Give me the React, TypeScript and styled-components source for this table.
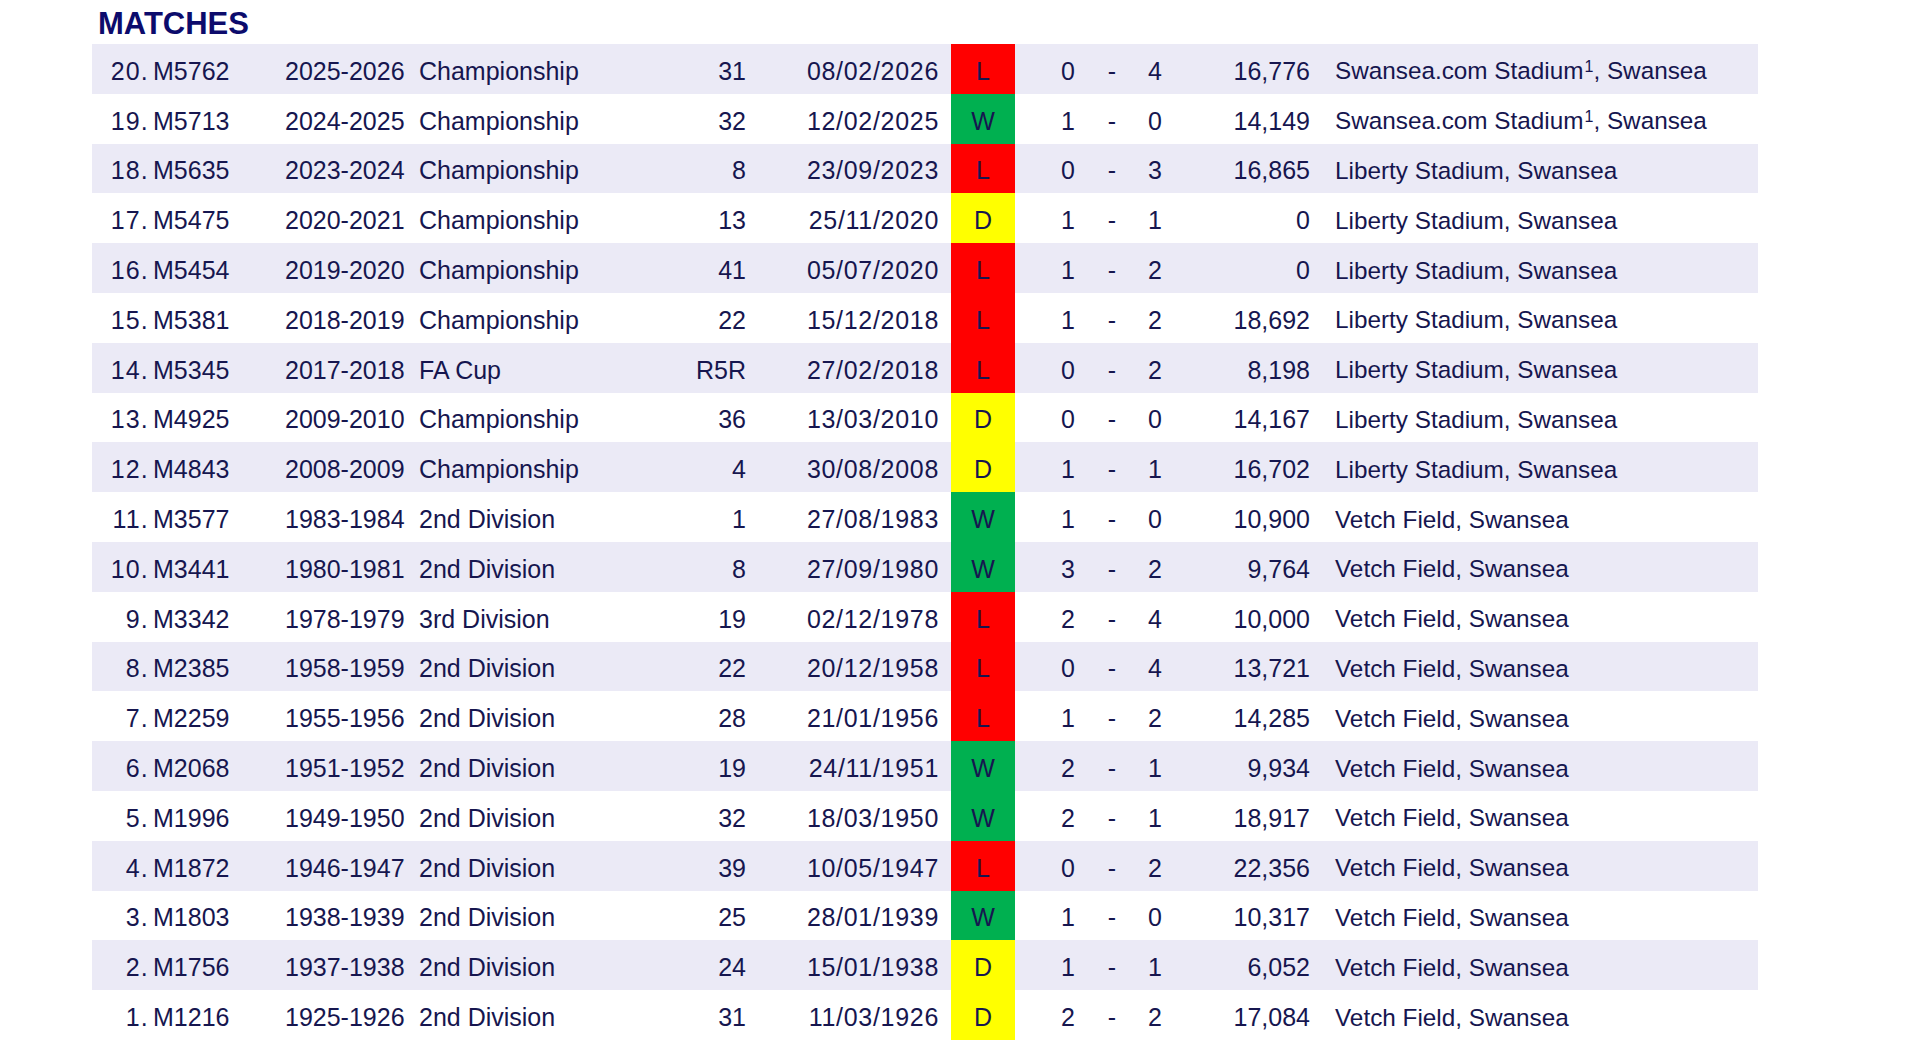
import React from 'react';
import styled, { createGlobalStyle } from 'styled-components';

type Result = 'W' | 'D' | 'L';

type Match = {
  no: number;
  code: string;
  season: string;
  competition: string;
  round: string;
  date: string;
  result: Result;
  home: number;
  away: number;
  attendance: string;
  venue: string;
  note?: boolean;
};

const LIBERTY = 'Liberty Stadium, Swansea';
const VETCH = 'Vetch Field, Swansea';

const matches: Match[] = [
  { no: 20, code: 'M5762', season: '2025-2026', competition: 'Championship', round: '31', date: '08/02/2026', result: 'L', home: 0, away: 4, attendance: '16,776', venue: 'Swansea.com Stadium', note: true },
  { no: 19, code: 'M5713', season: '2024-2025', competition: 'Championship', round: '32', date: '12/02/2025', result: 'W', home: 1, away: 0, attendance: '14,149', venue: 'Swansea.com Stadium', note: true },
  { no: 18, code: 'M5635', season: '2023-2024', competition: 'Championship', round: '8', date: '23/09/2023', result: 'L', home: 0, away: 3, attendance: '16,865', venue: LIBERTY },
  { no: 17, code: 'M5475', season: '2020-2021', competition: 'Championship', round: '13', date: '25/11/2020', result: 'D', home: 1, away: 1, attendance: '0', venue: LIBERTY },
  { no: 16, code: 'M5454', season: '2019-2020', competition: 'Championship', round: '41', date: '05/07/2020', result: 'L', home: 1, away: 2, attendance: '0', venue: LIBERTY },
  { no: 15, code: 'M5381', season: '2018-2019', competition: 'Championship', round: '22', date: '15/12/2018', result: 'L', home: 1, away: 2, attendance: '18,692', venue: LIBERTY },
  { no: 14, code: 'M5345', season: '2017-2018', competition: 'FA Cup', round: 'R5R', date: '27/02/2018', result: 'L', home: 0, away: 2, attendance: '8,198', venue: LIBERTY },
  { no: 13, code: 'M4925', season: '2009-2010', competition: 'Championship', round: '36', date: '13/03/2010', result: 'D', home: 0, away: 0, attendance: '14,167', venue: LIBERTY },
  { no: 12, code: 'M4843', season: '2008-2009', competition: 'Championship', round: '4', date: '30/08/2008', result: 'D', home: 1, away: 1, attendance: '16,702', venue: LIBERTY },
  { no: 11, code: 'M3577', season: '1983-1984', competition: '2nd Division', round: '1', date: '27/08/1983', result: 'W', home: 1, away: 0, attendance: '10,900', venue: VETCH },
  { no: 10, code: 'M3441', season: '1980-1981', competition: '2nd Division', round: '8', date: '27/09/1980', result: 'W', home: 3, away: 2, attendance: '9,764', venue: VETCH },
  { no: 9, code: 'M3342', season: '1978-1979', competition: '3rd Division', round: '19', date: '02/12/1978', result: 'L', home: 2, away: 4, attendance: '10,000', venue: VETCH },
  { no: 8, code: 'M2385', season: '1958-1959', competition: '2nd Division', round: '22', date: '20/12/1958', result: 'L', home: 0, away: 4, attendance: '13,721', venue: VETCH },
  { no: 7, code: 'M2259', season: '1955-1956', competition: '2nd Division', round: '28', date: '21/01/1956', result: 'L', home: 1, away: 2, attendance: '14,285', venue: VETCH },
  { no: 6, code: 'M2068', season: '1951-1952', competition: '2nd Division', round: '19', date: '24/11/1951', result: 'W', home: 2, away: 1, attendance: '9,934', venue: VETCH },
  { no: 5, code: 'M1996', season: '1949-1950', competition: '2nd Division', round: '32', date: '18/03/1950', result: 'W', home: 2, away: 1, attendance: '18,917', venue: VETCH },
  { no: 4, code: 'M1872', season: '1946-1947', competition: '2nd Division', round: '39', date: '10/05/1947', result: 'L', home: 0, away: 2, attendance: '22,356', venue: VETCH },
  { no: 3, code: 'M1803', season: '1938-1939', competition: '2nd Division', round: '25', date: '28/01/1939', result: 'W', home: 1, away: 0, attendance: '10,317', venue: VETCH },
  { no: 2, code: 'M1756', season: '1937-1938', competition: '2nd Division', round: '24', date: '15/01/1938', result: 'D', home: 1, away: 1, attendance: '6,052', venue: VETCH },
  { no: 1, code: 'M1216', season: '1925-1926', competition: '2nd Division', round: '31', date: '11/03/1926', result: 'D', home: 2, away: 2, attendance: '17,084', venue: VETCH },
];

const resultColours: Record<Result, string> = {
  W: '#00b050',
  D: '#ffff00',
  L: '#ff0000',
};

const App = () => {
  return (
    <PageStyled>
      <GlobalStyle />
      <TitleStyled>MATCHES</TitleStyled>
      <TableStyled>
        {matches.map((m, i) => (
          <RowStyled key={m.code} $shaded={i % 2 === 0}>
            <NumberStyled>{m.no}.</NumberStyled>
            <CodeStyled>{m.code}</CodeStyled>
            <CellStyled>{m.season}</CellStyled>
            <CellStyled>{m.competition}</CellStyled>
            <CellStyled $align="right">{m.round}</CellStyled>
            <DateStyled>{m.date}</DateStyled>
            <ResultStyled $result={m.result}>{m.result}</ResultStyled>
            <HomeScoreStyled>{m.home}</HomeScoreStyled>
            <CellStyled $align="center">-</CellStyled>
            <CellStyled $align="center">{m.away}</CellStyled>
            <CellStyled $align="right">{m.attendance}</CellStyled>
            <VenueStyled>
              {m.note ? (
                <>
                  {m.venue}
                  <NoteStyled>1</NoteStyled>, Swansea
                </>
              ) : (
                m.venue
              )}
            </VenueStyled>
          </RowStyled>
        ))}
      </TableStyled>
    </PageStyled>
  );
};

export default App;

const GlobalStyle = createGlobalStyle`
  html, body {
    margin: 0;
    padding: 0;
    background: #ffffff;
  }
  body {
    font-family: "Liberation Sans", Arial, sans-serif;
  }
`;

const PageStyled = styled.div`
  width: 1920px;
  height: 1041px;
  overflow: hidden;
  background: #ffffff;
  color: #16164f;
`;

const TitleStyled = styled.h1`
  margin: 0 0 0 98px;
  height: 44px;
  line-height: 48px;
  font-size: 31px;
  font-weight: 700;
  color: #0c0b6c;
`;

const TableStyled = styled.div`
  margin-left: 92px;
  width: 1666px;
  display: flex;
  flex-direction: column;
`;

const RowStyled = styled.div<{ $shaded: boolean }>`
  display: grid;
  grid-template-columns: 56px 137px 134px 261px 66px 192px 77px 81px 32px 54px 128px 1fr;
  height: 49.8px;
  background: ${(p) => (p.$shaded ? '#ebeaf6' : '#ffffff')};
  font-size: 25px;
`;

const CellStyled = styled.div<{ $align?: 'left' | 'right' | 'center' }>`
  display: flex;
  align-items: center;
  justify-content: ${(p) =>
    p.$align === 'right' ? 'flex-end' : p.$align === 'center' ? 'center' : 'flex-start'};
  padding-top: 5px;
  box-sizing: border-box;
  white-space: nowrap;
`;

const NumberStyled = styled(CellStyled).attrs({ $align: 'right' as const })`
  letter-spacing: 1.2px;
  margin-right: -1px;
`;

const CodeStyled = styled(CellStyled)`
  padding-left: 5px;
`;

const DateStyled = styled(CellStyled).attrs({ $align: 'right' as const })`
  letter-spacing: 0.7px;
  margin-right: -1px;
`;

const ResultStyled = styled(CellStyled).attrs({ $align: 'center' as const })<{ $result: Result }>`
  margin-left: 13px;
  background: ${(p) => resultColours[p.$result]};
`;

const HomeScoreStyled = styled(CellStyled).attrs({ $align: 'center' as const })`
  padding-left: 25px;
`;

const VenueStyled = styled(CellStyled)`
  padding-left: 25px;
  font-size: 24.3px;
`;

const NoteStyled = styled.sup`
  font-size: 16px;
  line-height: 0;
  position: relative;
  top: -4px;
  margin-left: 1px;
`;
